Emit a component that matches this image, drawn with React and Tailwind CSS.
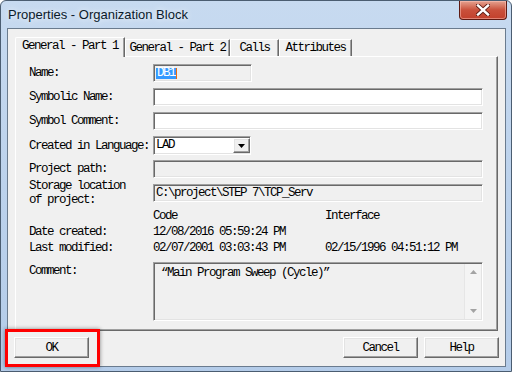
import React from 'react';

const mono = "font-['Liberation_Mono',monospace] text-[12.5px] tracking-[-1.5px] text-black";
const sunken = "border border-t-[#a0a0a0] border-l-[#a0a0a0] border-b-white border-r-white shadow-[inset_1px_1px_0_#696969,inset_-1px_-1px_0_#e3e3e3]";
const raised = "border border-t-white border-l-white border-b-[#696969] border-r-[#696969] shadow-[inset_-1px_-1px_0_#a0a0a0,inset_1px_1px_0_#e3e3e3]";

const Label = ({ children }) => (
    <div className="w-[124px] shrink-0 leading-[14px]">{children}</div>
);

const Field = ({ label, width = 'w-[330px]', white, children, className = '' }) => (
    <div className={`flex items-center ${className}`}>
        <Label>{label}</Label>
        <div className={`${width} h-[18px] ${sunken} ${white ? 'bg-white' : 'bg-[#f0f0f0]'} flex items-center pl-[2px] leading-[14px]`}>
            {children}
        </div>
    </div>
);

const Tab = ({ children, active, width }) =>
    active ? (
        <div className={`${width} h-[20px] -mb-px relative z-10 bg-[#f0f0f0] border-l border-t border-white rounded-tl-[2px] shadow-[inset_-1px_0_0_#a0a0a0] border-r border-r-[#696969] flex items-center justify-center pb-[3px] leading-[14px]`}>
            {children}
        </div>
    ) : (
        <div className={`${width} h-[17px] bg-[#f0f0f0] border-l border-t border-white border-r border-r-[#696969] shadow-[inset_-1px_0_0_#a0a0a0] flex items-center justify-center leading-[14px]`}>
            {children}
        </div>
    );

const Button = ({ children }) => (
    <div className={`w-[75px] h-[21px] ${raised} bg-[#f0f0f0] flex items-center justify-center leading-[14px]`}>
        {children}
    </div>
);

export default function App() {
    return (
        <div className="w-[512px] h-[372px] relative overflow-hidden bg-white">
            <div className="w-[512px] h-[372px] flex flex-col border border-[#4b5d71] rounded-t-[6px] bg-gradient-to-b from-[#c7daf0] via-[#bcd2ec] to-[#b4cce9]">
                {/* title bar */}
                <div className="h-[27px] shrink-0 flex items-start justify-between">
                    <div className="pl-[7px] pt-[6px] font-['Segoe_UI','Liberation_Sans',sans-serif] text-[13px] leading-[16px] text-[#0b1a2b] [text-shadow:0_0_6px_#ffffff]">
                        Properties - Organization Block
                    </div>
                    <div className="mr-[4px] w-[48px] h-[19px] rounded-b-[4px] border border-t-0 border-[#5e1a12] bg-gradient-to-b from-[#e4a290] via-[#c9503b] to-[#c2402c] shadow-[inset_0_0_0_1px_rgba(255,200,190,0.5)] flex items-center justify-center">
                        <svg width="14" height="12" viewBox="0 0 14 12">
                            <path d="M2 1.5 L12 10.5 M12 1.5 L2 10.5" stroke="#5a1a12" strokeWidth="4.2" strokeLinecap="square" />
                            <path d="M2 1.5 L12 10.5 M12 1.5 L2 10.5" stroke="#ffffff" strokeWidth="2.4" strokeLinecap="square" />
                        </svg>
                    </div>
                </div>

                {/* client area */}
                <div className={`flex-1 ml-[6px] mr-[5px] mb-[4px] border border-[#6a7b8e] bg-[#f0f0f0] flex flex-col pt-[8px] pl-[7px] ${mono}`}>
                    <div className="flex items-end h-[19px]">
                        <Tab active width="w-[110px]">General - Part 1</Tab>
                        <Tab width="w-[105px]">General - Part 2</Tab>
                        <Tab width="w-[49px]">Calls</Tab>
                        <Tab width="w-[73px]">Attributes</Tab>
                    </div>

                    <div className="w-[483px] h-[275px] border border-t-white border-l-white border-b-[#696969] border-r-[#696969] shadow-[inset_-1px_-1px_0_#a0a0a0] flex flex-col pl-[13px]">
                        <Field label="Name:" width="w-[99px]" className="mt-[7px]">
                            <span className="bg-[#3399ff] text-white px-px h-[11px] flex items-center">DB1</span>
                            <span className="w-px h-[11px] bg-[#e86a10]" />
                        </Field>
                        <Field label="Symbolic Name:" white className="mt-[6px]" />
                        <Field label="Symbol Comment:" white className="mt-[6px]" />
                        <div className="flex items-center mt-[6px]">
                            <Label>Created in Language:</Label>
                            <div className={`w-[98px] h-[19px] ${sunken} bg-white flex items-center justify-between pl-[2px]`}>
                                <span>LAD</span>
                                <div className={`w-[17px] h-[15px] ${raised} bg-[#f0f0f0] flex items-center justify-center`}>
                                    <svg width="7" height="4" viewBox="0 0 7 4">
                                        <path d="M0 0 H7 L3.5 4 Z" fill="#000" />
                                    </svg>
                                </div>
                            </div>
                        </div>
                        <Field label="Project path:" className="mt-[5px]" />
                        <div className="flex items-center mt-[6px] h-[18px]">
                            <div className="w-[124px] shrink-0 leading-[14px] my-[-5px]">
                                Storage location
                                <br />
                                of project:
                            </div>
                            <div className={`w-[330px] h-[18px] ${sunken} bg-[#f0f0f0] flex items-center pl-[2px]`}>
                                C:\project\STEP 7\TCP_Serv
                            </div>
                        </div>

                        <div className="flex h-[14px] mt-[7px] leading-[14px]">
                            <div className="w-[124px]" />
                            <div className="w-[172px]">Code</div>
                            <div>Interface</div>
                        </div>
                        <div className="flex h-[14px] mt-[2px] leading-[14px]">
                            <div className="w-[124px]">Date created:</div>
                            <div className="w-[172px]">12/08/2016 05:59:24 PM</div>
                        </div>
                        <div className="flex h-[14px] mt-[2px] leading-[14px]">
                            <div className="w-[124px]">Last modified:</div>
                            <div className="w-[172px]">02/07/2001 03:03:43 PM</div>
                            <div>02/15/1996 04:51:12 PM</div>
                        </div>

                        <div className="flex mt-[7px]">
                            <div className="w-[124px] pt-[2px] leading-[14px]">Comment:</div>
                            <div className={`w-[330px] h-[59px] ${sunken} bg-[#f0f0f0] flex`}>
                                <div className="flex-1 pl-[7px] pt-[3px] leading-[14px]">“Main Program Sweep (Cycle)”</div>
                                <div className="w-[17px] mr-px my-px bg-[#f4f4f4] border-l border-[#e6e6e6] flex flex-col justify-between items-center py-[6px]">
                                    <svg width="7" height="4" viewBox="0 0 7 4">
                                        <path d="M3.5 0 L7 4 H0 Z" fill="#a3a3a3" />
                                    </svg>
                                    <svg width="7" height="4" viewBox="0 0 7 4">
                                        <path d="M0 0 H7 L3.5 4 Z" fill="#a3a3a3" />
                                    </svg>
                                </div>
                            </div>
                        </div>
                    </div>

                    <div className="flex mt-[6px] pr-[6px]">
                        <div className="ml-[-1px]">
                            <Button>OK</Button>
                        </div>
                        <div className="flex-1" />
                        <div className="flex gap-[6px]">
                            <Button>Cancel</Button>
                            <Button>Help</Button>
                        </div>
                    </div>
                </div>
            </div>

            {/* red highlight annotation around OK */}
            <div className="absolute left-[5px] top-[329px] w-[95px] h-[38px] border-[3px] border-[#ff0000] shadow-[0_0_4px_rgba(0,0,0,0.45)]" />
        </div>
    );
}
